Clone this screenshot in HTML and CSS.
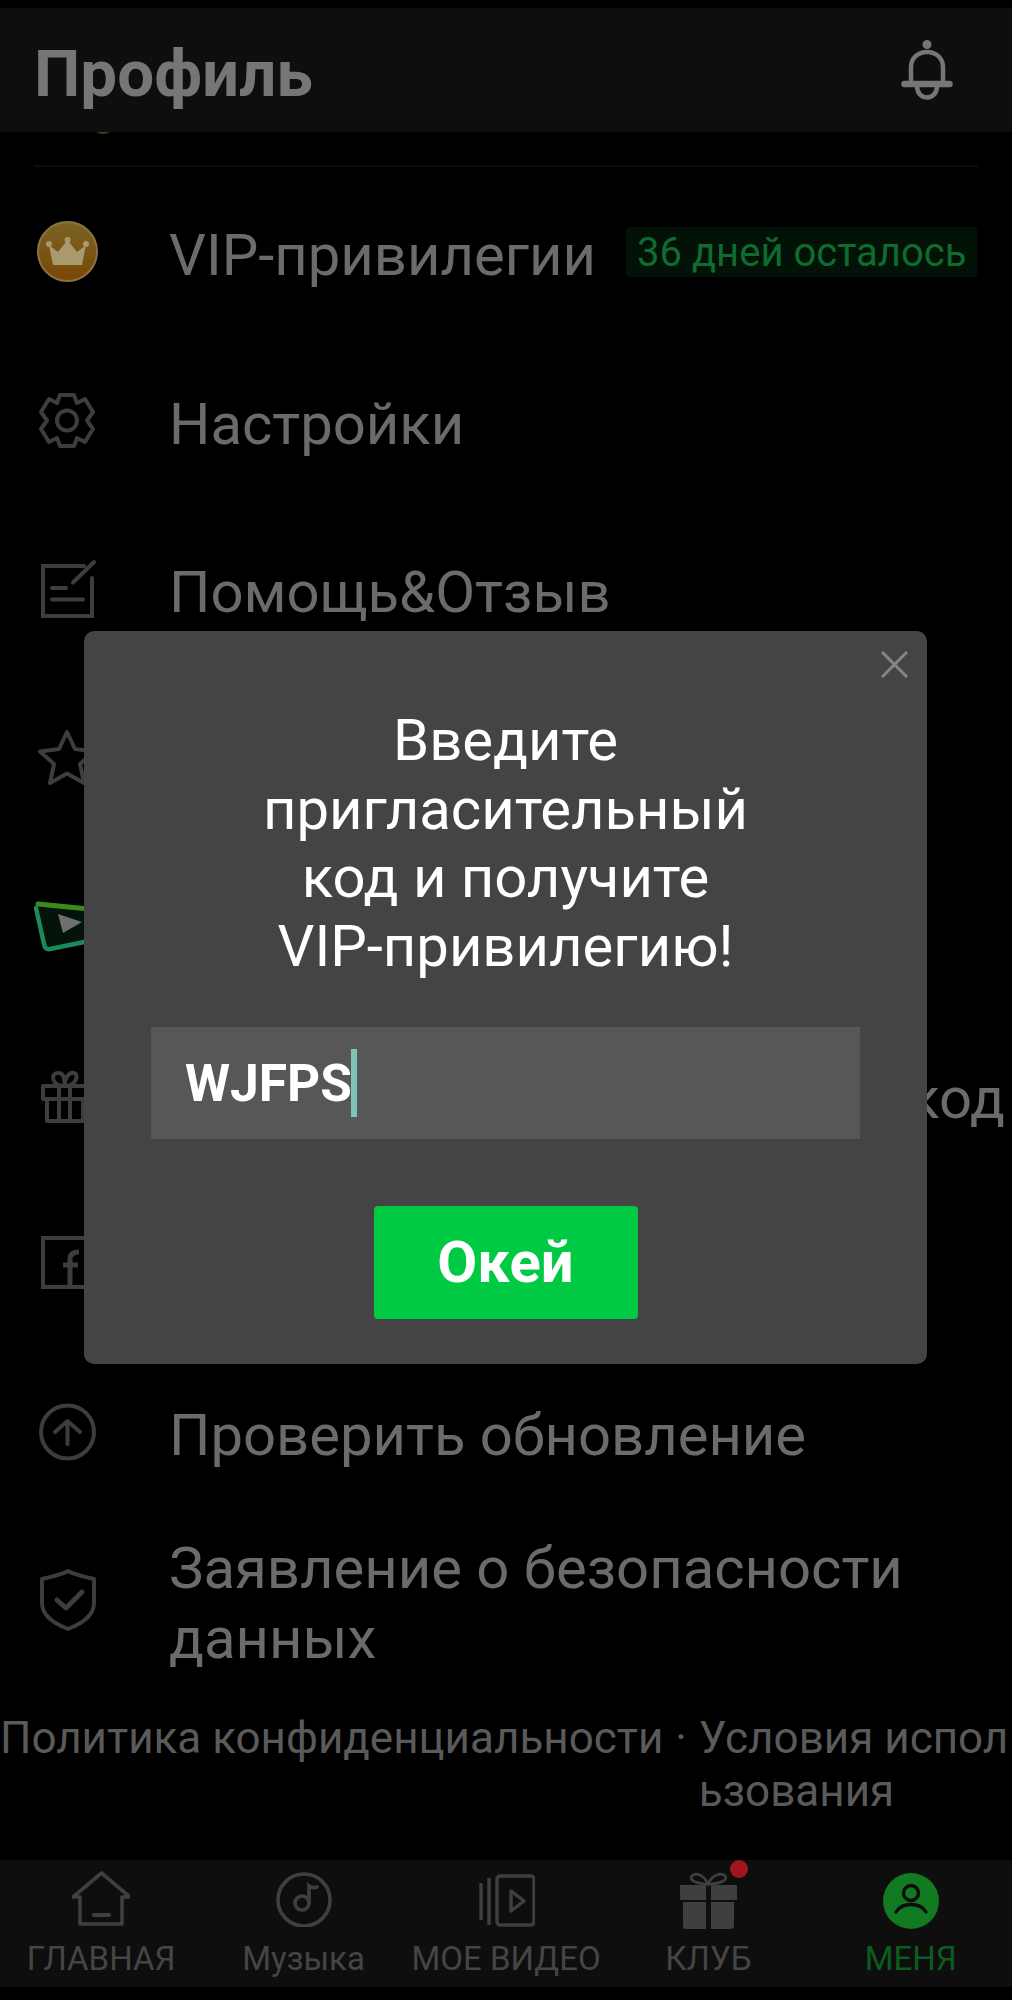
FILE: index.html
```html
<!DOCTYPE html>
<html>
<head>
    <title>Профиль</title>
    <link rel="stylesheet" href="styles.css">
</head>
<body>
    <div class="screen">
        <div class="header">
            <h1>Профиль</h1>
            <svg class="bell" viewBox="0 0 52 60" fill="none" stroke="#767676" stroke-width="4.5" stroke-linecap="round">
                <circle cx="26" cy="4.5" r="4.5" fill="#767676" stroke="none"/>
                <path d="M10 44V27C10 18 17 12 26 12S42 18 42 27V44"/>
                <path d="M3.5 44H48.5" stroke-width="6.5"/>
                <path d="M16 47C17 61 35 61 36 47"/>
            </svg>
        </div>

        <div class="list">
            <div class="peek"><span class="peek-arc"></span></div>

            <div class="row">
                <svg class="icon" viewBox="0 0 62 62">
                    <defs>
                        <linearGradient id="coin" x1="0" y1="0" x2="0" y2="1">
                            <stop offset="0" stop-color="#7a6424"/>
                            <stop offset="1" stop-color="#7a4606"/>
                        </linearGradient>
                    </defs>
                    <circle cx="30.5" cy="30.5" r="29.5" fill="url(#coin)" stroke="#8a7444" stroke-width="2"/>
                    <path d="M12 24L21 31L30.5 19L40 31L49 24L45 44H16Z" fill="#a89a6e"/>
                    <circle cx="12" cy="23" r="3" fill="#a89a6e"/>
                    <circle cx="30.5" cy="19" r="3" fill="#a89a6e"/>
                    <circle cx="49" cy="23" r="3" fill="#a89a6e"/>
                </svg>
                <span class="label">VIP-привилегии</span>
                <span class="days">36 дней осталось</span>
            </div>

            <div class="row">
                <svg class="icon" viewBox="0 0 62 62" fill="none" stroke="#3d3d3d" stroke-width="4" stroke-linejoin="round">
                    <path d="M23 5H37L40 13L48 9L56 22L50 30.5L56 39L48 52L40 48L37 56H23L20 48L12 52L4 39L10 30.5L4 22L12 9L20 13Z"/>
                    <circle cx="30" cy="30.5" r="10"/>
                </svg>
                <span class="label">Настройки</span>
            </div>

            <div class="row">
                <svg class="icon" viewBox="0 0 62 62" fill="none" stroke="#3d3d3d" stroke-width="4" stroke-linecap="round">
                    <path d="M55 20V58H6V8H47"/>
                    <path d="M36 24.5L57 4"/>
                    <path d="M15 30H29"/>
                    <path d="M15 41.5H46"/>
                </svg>
                <span class="label">Помощь&amp;Отзыв</span>
            </div>

            <div class="row">
                <svg class="icon" viewBox="0 0 62 62" fill="none" stroke="#3d3d3d" stroke-width="4" stroke-linejoin="round">
                    <path d="M30 5L38 22L57 24.5L43 37L47 56L30 46.5L13 56L17 37L3 24.5L22 22Z"/>
                </svg>
            </div>

            <div class="row">
                <svg class="icon icon-free" viewBox="0 0 62 62" fill="none" stroke-linecap="round" stroke-linejoin="round">
                    <path d="M1 11L60 14V44L10 53Z" fill="#04140b"/>
                    <path d="M-1 13L7 49Q8 55 13 54L62 44" stroke="#1a8a5c" stroke-width="4.5"/>
                    <path d="M1 9L62 15" stroke="#3c8a1e" stroke-width="5"/>
                    <path d="M21 19L45 27L26 38Z" fill="#6f6f6f"/>
                </svg>
            </div>

            <div class="row">
                <svg class="icon" viewBox="0 0 62 62" fill="none" stroke="#3d3d3d" stroke-width="4" stroke-linejoin="round">
                    <path d="M6 22H50V35H6Z"/>
                    <path d="M10 35V57H46V35"/>
                    <path d="M22 22V57M33 22V57"/>
                    <path d="M27.5 22C15 22 13 10 20 9S27.5 14 27.5 22C27.5 14 32 8 37 9S40 22 27.5 22Z"/>
                </svg>
                <span class="label label-end">код</span>
            </div>

            <div class="row">
                <svg class="icon" viewBox="0 0 62 62" fill="none" stroke="#3d3d3d" stroke-width="4">
                    <path d="M6 6H55V55H6Z"/>
                    <path d="M33 55V27C33 22 36 20 42 20M26 33H41" stroke-width="5"/>
                </svg>
            </div>

            <div class="row">
                <svg class="icon" viewBox="0 0 62 62" fill="none" stroke="#3d3d3d" stroke-width="4" stroke-linecap="round" stroke-linejoin="round">
                    <circle cx="30.5" cy="31" r="26.5"/>
                    <path d="M30.5 43V20M18 31L30.5 20L43 31"/>
                </svg>
                <span class="label">Проверить обновление</span>
            </div>

            <div class="row row-tall">
                <svg class="icon" viewBox="0 0 62 62" fill="none" stroke="#3d3d3d" stroke-width="4" stroke-linejoin="round" stroke-linecap="round">
                    <path d="M31 2C38 6 48 8 57 10V34C57 47 44 55 31 60C18 55 5 47 5 34V10C14 8 24 6 31 2Z"/>
                    <path d="M20 31L29 39L45 23" stroke-width="5"/>
                </svg>
                <span class="label">Заявление о безопасности данных</span>
            </div>
        </div>

        <div class="policy">
            <span>Политика конфиденциальности</span>
            <span class="dot">·</span>
            <span class="terms">Условия использования</span>
        </div>

        <div class="tabbar">
            <div class="tab">
                <svg class="tab-icon" viewBox="0 0 58 56" fill="none" stroke="#3f3f3f" stroke-width="3.6" stroke-linejoin="round" stroke-linecap="round">
                    <path d="M8 26H1L29.5 2L58 26H50V53H8Z"/>
                    <path d="M22 44H37" stroke-width="4"/>
                </svg>
                <span>ГЛАВНАЯ</span>
            </div>
            <div class="tab">
                <svg class="tab-icon" viewBox="0 0 58 56" fill="none" stroke="#3f3f3f" stroke-width="3.6" stroke-linecap="round">
                    <circle cx="29" cy="29" r="26"/>
                    <circle cx="27" cy="32" r="7"/>
                    <path d="M34 32V15C36 17 39 17 42 16"/>
                </svg>
                <span>Музыка</span>
            </div>
            <div class="tab">
                <svg class="tab-icon" viewBox="0 0 58 56" fill="none" stroke="#3f3f3f" stroke-width="3.4" stroke-linejoin="round">
                    <path d="M4 12V49M12 7V54"/>
                    <rect x="20" y="5" width="37" height="49" rx="3"/>
                    <path d="M34 20L47 30L34 40Z"/>
                </svg>
                <span>МОЕ ВИДЕО</span>
            </div>
            <div class="tab">
                <svg class="tab-icon icon-free" viewBox="0 0 58 56" fill="#3f3f3f">
                    <path d="M29 13C18 13 9 9 13 5S25 4 29 13C33 4 42 1 46 5S40 13 29 13Z" fill="none" stroke="#3f3f3f" stroke-width="2.6"/>
                    <path d="M1 14H27V29H1ZM32 14H58V29H32ZM4 31H27V58H7Q4 58 4 55ZM32 31H55V55Q55 58 52 58H32Z"/>
                </svg>
                <span class="red-dot"></span>
                <span>КЛУБ</span>
            </div>
            <div class="tab tab-active">
                <svg class="tab-icon icon-free" viewBox="0 0 58 56" fill="none">
                    <circle cx="29" cy="30" r="28" fill="#127a20"/>
                    <circle cx="29" cy="22" r="7.5" stroke="#0d0d0d" stroke-width="3.4"/>
                    <path d="M14 41C20 31 38 31 44 41" stroke="#0d0d0d" stroke-width="3.4" stroke-linecap="round"/>
                </svg>
                <span>МЕНЯ</span>
            </div>
        </div>

        <div class="dialog">
            <svg class="close" viewBox="0 0 27 27" stroke="#858585" stroke-width="3" fill="none">
                <path d="M1 1L26 26M26 1L1 26"/>
            </svg>
            <p class="dialog-title">Введите<br>пригласительный<br>код и получите<br>VIP-привилегию!</p>
            <div class="code-input">
                <span>WJFPS</span><span class="caret"></span>
            </div>
            <div class="ok-btn">Окей</div>
        </div>
    </div>
</body>
</html>
```

FILE: styles.css
```css
body {
    font-family: Roboto, "Noto Sans", sans-serif;
    margin: 0;
    background-color: #000;
}
.screen {
    position: relative;
    width: 1012px;
    height: 2000px;
    overflow: hidden;
    padding: 8px 0 13px;
    box-sizing: border-box;
    display: flex;
    flex-direction: column;
}
.header {
    flex: none;
    height: 124px;
    padding: 0 59px 0 34px;
    background-color: #0e0e0e;
    display: flex;
    align-items: center;
    justify-content: space-between;
    position: relative;
    z-index: 1;
}
.header h1 {
    margin: 6px 0 0;
    font-size: 65.5px;
    font-weight: 700;
    color: #767676;
}
.bell {
    width: 52px;
    height: 60px;
}
.peek {
    height: 33px;
    margin: 0 34px 1px;
    border-bottom: 2px solid #0d0d0d;
    position: relative;
}
.peek-arc {
    position: absolute;
    left: 60px;
    top: -10px;
    width: 18px;
    height: 12px;
    border-radius: 50%;
    background-color: #4a3a15;
}
.row {
    height: 168.5px;
    margin-left: 37px;
    display: flex;
    align-items: center;
    white-space: nowrap;
}
.row-tall {
    height: 168px;
    white-space: normal;
}
.row-tall .label {
    width: 760px;
    line-height: 70px;
}
.icon {
    width: 62px;
    height: 62px;
    flex-shrink: 0;
    margin-right: 70px;
}
.icon-free {
    overflow: visible;
}
.label {
    margin-top: 6px;
    font-size: 58px;
    color: #6b6b6b;
}
.label-end {
    margin-left: auto;
    padding-right: 7px;
}
.days {
    margin: 0 0 0 30px;
    padding: 0 11px;
    height: 50px;
    line-height: 52px;
    font-size: 40px;
    color: #0f6b30;
    background-color: #021206;
    border-radius: 4px;
}
.policy {
    margin-top: 28px;
    font-size: 44px;
    line-height: 53px;
    color: #5a5a5a;
    white-space: nowrap;
    display: flex;
    gap: 12px;
}
.terms {
    width: 312px;
    white-space: normal;
    word-break: break-all;
}
.tabbar {
    flex: none;
    margin-top: auto;
    height: 127px;
    background-color: #0e0e0e;
    display: flex;
}
.tab {
    flex: 1;
    position: relative;
    display: flex;
    flex-direction: column;
    align-items: center;
    padding-top: 11px;
    font-size: 33px;
    color: #454545;
    white-space: nowrap;
}
.tab-icon {
    width: 58px;
    height: 56px;
    margin-bottom: 12px;
}
.tab-active {
    color: #0c5c1d;
}
.red-dot {
    position: absolute;
    right: 62px;
    top: 0;
    width: 18px;
    height: 18px;
    border-radius: 50%;
    background-color: #a01520;
}
.dialog {
    position: absolute;
    left: 84px;
    top: 631px;
    width: 843px;
    height: 733px;
    background-color: #444;
    border-radius: 10px;
    z-index: 2;
    display: flex;
    flex-direction: column;
    align-items: center;
    padding-top: 75px;
    box-sizing: border-box;
}
.close {
    position: absolute;
    right: 19px;
    top: 20px;
    width: 27px;
    height: 27px;
}
.dialog-title {
    margin: 0 0 47px;
    font-size: 58px;
    line-height: 68.5px;
    color: #fff;
    text-align: center;
}
.code-input {
    width: 709px;
    height: 112px;
    padding-left: 34px;
    box-sizing: border-box;
    background-color: #575757;
    display: flex;
    align-items: center;
    font-size: 51.5px;
    font-weight: 700;
    color: #fff;
}
.caret {
    width: 6px;
    height: 68px;
    margin-left: -1px;
    background-color: #7fc4b8;
}
.ok-btn {
    width: 264px;
    height: 113px;
    margin-top: 67px;
    background-color: #00c944;
    border-radius: 4px;
    font-size: 58px;
    font-weight: 700;
    color: #fff;
    text-align: center;
    line-height: 113px;
}
```
